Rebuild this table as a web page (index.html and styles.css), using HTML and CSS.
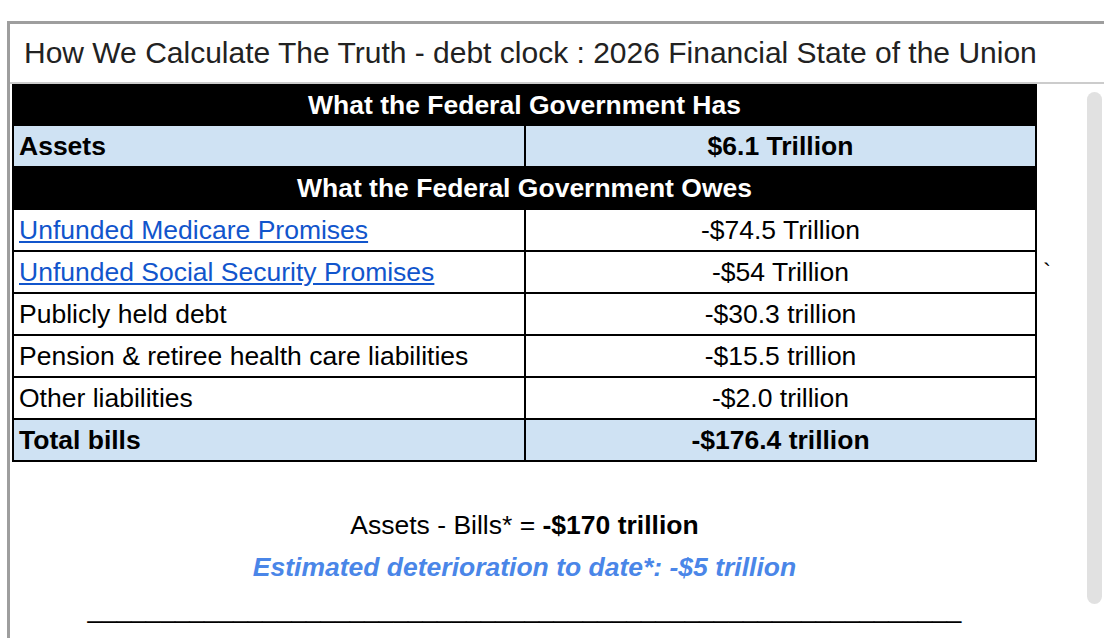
FILE: index.html
```html
<!DOCTYPE html>
<html lang="en">
<head>
<meta charset="utf-8">
<title>How We Calculate The Truth - debt clock</title>
<link rel="stylesheet" href="styles.css">
</head>
<body>
<div class="frame">
  <div class="frame-title">How We Calculate The Truth - debt clock : 2026 Financial State of the Union</div>
  <div class="frame-body">
    <table class="sheet">
      <colgroup>
        <col class="c-label">
        <col class="c-value">
        <col class="c-extra">
      </colgroup>
      <tr class="head first"><td colspan="2">What the Federal Government Has</td><td class="extra"></td></tr>
      <tr class="hl"><td class="lbl b">Assets</td><td class="val b">$6.1 Trillion</td><td class="extra"></td></tr>
      <tr class="head"><td colspan="2">What the Federal Government Owes</td><td class="extra"></td></tr>
      <tr><td class="lbl"><a href="#">Unfunded Medicare Promises</a></td><td class="val">-$74.5 Trillion</td><td class="extra"></td></tr>
      <tr><td class="lbl"><a href="#">Unfunded Social Security Promises</a></td><td class="val">-$54 Trillion</td><td class="extra">`</td></tr>
      <tr><td class="lbl">Publicly held debt</td><td class="val">-$30.3 trillion</td><td class="extra"></td></tr>
      <tr><td class="lbl">Pension &amp; retiree health care liabilities</td><td class="val">-$15.5 trillion</td><td class="extra"></td></tr>
      <tr><td class="lbl">Other liabilities</td><td class="val">-$2.0 trillion</td><td class="extra"></td></tr>
      <tr class="hl"><td class="lbl b">Total bills</td><td class="val b">-$176.4 trillion</td><td class="extra"></td></tr>
    </table>
    <div class="summary">
      <p class="blank">&nbsp;</p>
      <p>Assets - Bills* = <b>-$170 trillion</b></p>
      <p class="estimate">Estimated deterioration to date*: -$5 trillion</p>
      <p class="rule">____________________________________________________________</p>
    </div>
  </div>
  <div class="scroll-thumb"></div>
</div>
</body>
</html>
```

FILE: styles.css
```css
html, body {
  margin: 0;
  padding: 0;
  background: #ffffff;
  overflow: hidden;
}

body {
  font-family: "Liberation Sans", Arial, Helvetica, sans-serif;
  color: #000000;
  height: 638px;
}

.frame {
  position: relative;
  margin: 21px 0 0 7px;
  border-top: 3px solid #9e9e9e;
  border-left: 3px solid #9e9e9e;
  height: 620px;
}

.frame-title {
  height: 58px;
  line-height: 58px;
  padding-left: 14px;
  font-size: 30px;
  color: #222222;
  border-bottom: 2px solid #cccccc;
  white-space: nowrap;
}

.frame-body {
  padding-left: 2px;
}

.sheet {
  border-collapse: collapse;
  table-layout: fixed;
  width: 1058px;
  font-size: 26.5px;
}

.c-label { width: 512px; }
.c-value { width: 511px; }
.c-extra { width: 35px; }

.sheet td {
  border: 2px solid #000000;
  height: 42px;
  padding: 0 5px;
  line-height: 30px;
  box-sizing: border-box;
  white-space: nowrap;
  overflow: hidden;
}

.sheet tr.first td {
  height: 40px;
}

.sheet td.extra {
  border: none;
  padding-left: 6px;
  font-size: 24px;
  line-height: 26px;
  vertical-align: top;
  padding-top: 8px;
}

.sheet tr.head td:first-child {
  background: #000000;
  color: #ffffff;
  font-weight: bold;
  text-align: center;
}

.sheet tr.hl td.lbl,
.sheet tr.hl td.val {
  background: #cfe2f3;
}

.val { text-align: center; }
.b { font-weight: bold; }

.sheet a {
  color: #1155cc;
  text-decoration: underline;
}

.summary {
  width: 1025px;
  text-align: center;
  font-size: 26.5px;
}

.summary p {
  margin: 0;
  line-height: 42px;
  height: 42px;
  white-space: nowrap;
}

.summary .estimate {
  color: #4a86e8;
  font-weight: bold;
  font-style: italic;
}

.summary .rule {
  font-size: 26.2px;
}

.scroll-thumb {
  position: absolute;
  top: 68px;
  right: 2px;
  width: 15px;
  height: 512px;
  border-radius: 8px;
  background: #e1e1e1;
}
```
